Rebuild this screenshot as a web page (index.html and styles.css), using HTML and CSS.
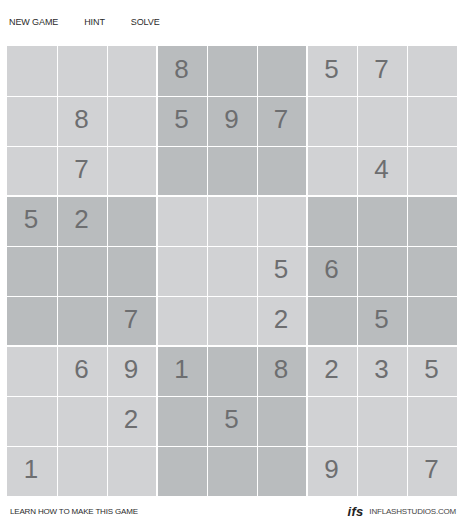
FILE: index.html
```html
<!DOCTYPE html>
<html lang="en">
<head>
<meta charset="utf-8">
<title>Sudoku</title>
<link rel="stylesheet" href="styles.css">
</head>
<body>
<main class="game">
  <nav class="menu">
    <a class="menu-item">NEW GAME</a>
    <a class="menu-item">HINT</a>
    <a class="menu-item">SOLVE</a>
  </nav>
  <div class="board">
    <div class="block"><div class="cell"></div><div class="cell"></div><div class="cell"></div><div class="cell"></div><div class="cell">8</div><div class="cell"></div><div class="cell"></div><div class="cell">7</div><div class="cell"></div></div>
    <div class="block dark"><div class="cell">8</div><div class="cell"></div><div class="cell"></div><div class="cell">5</div><div class="cell">9</div><div class="cell">7</div><div class="cell"></div><div class="cell"></div><div class="cell"></div></div>
    <div class="block"><div class="cell">5</div><div class="cell">7</div><div class="cell"></div><div class="cell"></div><div class="cell"></div><div class="cell"></div><div class="cell"></div><div class="cell">4</div><div class="cell"></div></div>
    <div class="block dark"><div class="cell">5</div><div class="cell">2</div><div class="cell"></div><div class="cell"></div><div class="cell"></div><div class="cell"></div><div class="cell"></div><div class="cell"></div><div class="cell">7</div></div>
    <div class="block"><div class="cell"></div><div class="cell"></div><div class="cell"></div><div class="cell"></div><div class="cell"></div><div class="cell">5</div><div class="cell"></div><div class="cell"></div><div class="cell">2</div></div>
    <div class="block dark"><div class="cell"></div><div class="cell"></div><div class="cell"></div><div class="cell">6</div><div class="cell"></div><div class="cell"></div><div class="cell"></div><div class="cell">5</div><div class="cell"></div></div>
    <div class="block"><div class="cell"></div><div class="cell">6</div><div class="cell">9</div><div class="cell"></div><div class="cell"></div><div class="cell">2</div><div class="cell">1</div><div class="cell"></div><div class="cell"></div></div>
    <div class="block dark"><div class="cell">1</div><div class="cell"></div><div class="cell">8</div><div class="cell"></div><div class="cell">5</div><div class="cell"></div><div class="cell"></div><div class="cell"></div><div class="cell"></div></div>
    <div class="block"><div class="cell">2</div><div class="cell">3</div><div class="cell">5</div><div class="cell"></div><div class="cell"></div><div class="cell"></div><div class="cell">9</div><div class="cell"></div><div class="cell">7</div></div>
  </div>
  <footer class="footer">
    <a class="footer-link">LEARN HOW TO MAKE THIS GAME</a>
    <div class="brand"><span class="brand-logo">ifs</span><span class="brand-name">INFLASHSTUDIOS.COM</span></div>
  </footer>
</main>
</body>
</html>
```
FILE: styles.css
```css
* { box-sizing: border-box; }
html, body { margin: 0; padding: 0; background: #fff; }
body { font-family: "Liberation Sans", Arial, sans-serif; color: #2b2b2b; }
.game { width: 461px; height: 522px; padding: 0 4px 0 7px; display: flex; flex-direction: column; }
.menu { height: 46px; padding: 0 0 3px 2px; display: flex; align-items: center; gap: 26px; }
.menu-item { font-size: 9px; letter-spacing: -0.1px; }
.board { display: grid; grid-template-columns: 149px 148px 149px; grid-template-rows: 149px 148px 149px; gap: 2px; }
.block { display: grid; gap: 1px; background: #fff; }
.block:nth-child(3n+1) { grid-template-columns: 50px 49px 48px; }
.block:nth-child(3n+2) { grid-template-columns: 49px 49px 48px; }
.block:nth-child(3n) { grid-template-columns: 49px 49px 49px; }
.block:nth-child(-n+3) { grid-template-rows: 50px 49px 48px; }
.block:nth-child(n+4):nth-child(-n+6) { grid-template-rows: 49px 49px 48px; }
.block:nth-child(n+7) { grid-template-rows: 49px 49px 49px; }
.cell { background: #d1d2d4; color: #6d6e70; font-size: 26px; display: flex; align-items: center; justify-content: center; padding: 0 2px 4px 0; }
.dark .cell { background: #b9bcbe; }
.footer { flex: 1; display: flex; align-items: center; justify-content: space-between; padding: 5px 1px 0 3px; }
.footer-link { font-size: 8px; letter-spacing: -0.17px; }
.brand { display: flex; align-items: center; gap: 6px; }
.brand-logo { font-size: 13px; font-weight: bold; font-style: italic; letter-spacing: 0.2px; color: #222; }
.brand-name { font-size: 8px; letter-spacing: -0.2px; color: #444; }
```
